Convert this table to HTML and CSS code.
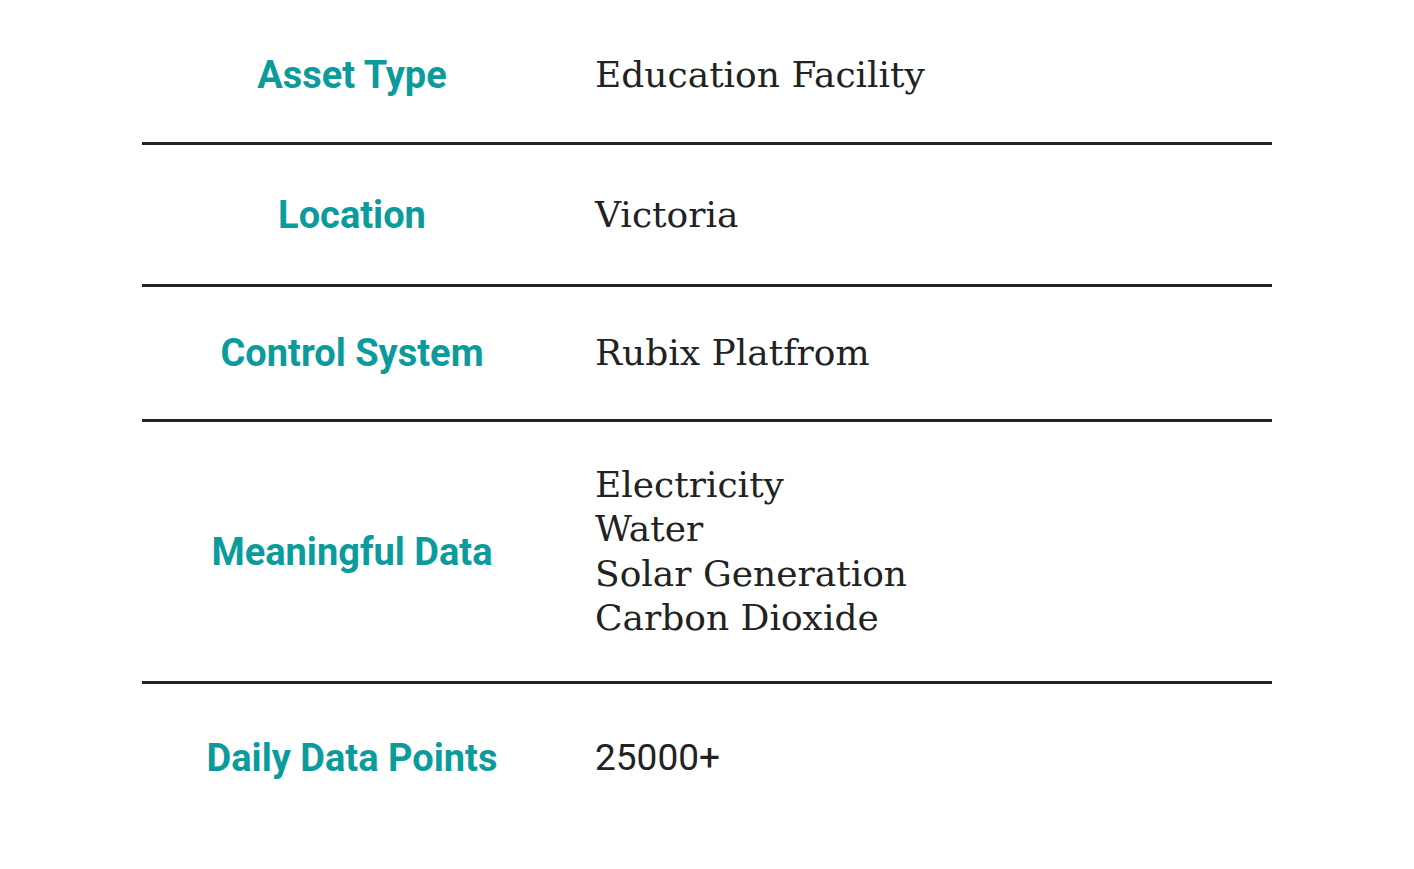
FILE: index.html
```html
<!DOCTYPE html>
<html lang="en">
<head>
<meta charset="utf-8">
<title>Asset Details</title>
<link rel="stylesheet" href="styles.css">
</head>
<body>
<div class="spec">
  <div class="row row-1">
    <div class="label">Asset Type</div>
    <div class="value">Education Facility</div>
  </div>
  <div class="row row-2">
    <div class="label">Location</div>
    <div class="value">Victoria</div>
  </div>
  <div class="row row-3">
    <div class="label">Control System</div>
    <div class="value">Rubix Platfrom</div>
  </div>
  <div class="row row-4">
    <div class="label">Meaningful Data</div>
    <div class="value list">
      <span>Electricity</span>
      <span>Water</span>
      <span>Solar Generation</span>
      <span>Carbon Dioxide</span>
    </div>
  </div>
  <div class="row row-5">
    <div class="label">Daily Data Points</div>
    <div class="value num">25000+</div>
  </div>
</div>
</body>
</html>
```
FILE: styles.css
```css
html, body {
  background: #ffffff;
}
body {
  margin: 8px;
  color: #222222;
}
.spec {
  width: 1130px;
  margin-left: 134px;
  display: flex;
  flex-direction: column;
}
.row {
  display: grid;
  grid-template-columns: 420px 1fr;
  align-items: center;
  border-bottom: 3px solid #222222;
}
.row:last-child {
  border-bottom: none;
}
.row-1 { height: 134px; }
.row-2 { height: 139px; }
.row-3 { height: 132px; }
.row-4 { height: 259px; }
.row-5 { height: 148px; }
.label {
  font-family: Roboto, "Liberation Sans", sans-serif;
  font-weight: 700;
  font-size: 38px;
  line-height: 44px;
  color: #0b9b9c;
  text-align: center;
}
.value {
  padding-left: 33px;
  font-family: "DejaVu Serif", serif;
  font-size: 36px;
  line-height: 44px;
  color: #222222;
}
.list {
  display: flex;
  flex-direction: column;
  line-height: 44.5px;
}
.num {
  font-family: Roboto, "Liberation Sans", sans-serif;
  font-size: 37px;
}
```
